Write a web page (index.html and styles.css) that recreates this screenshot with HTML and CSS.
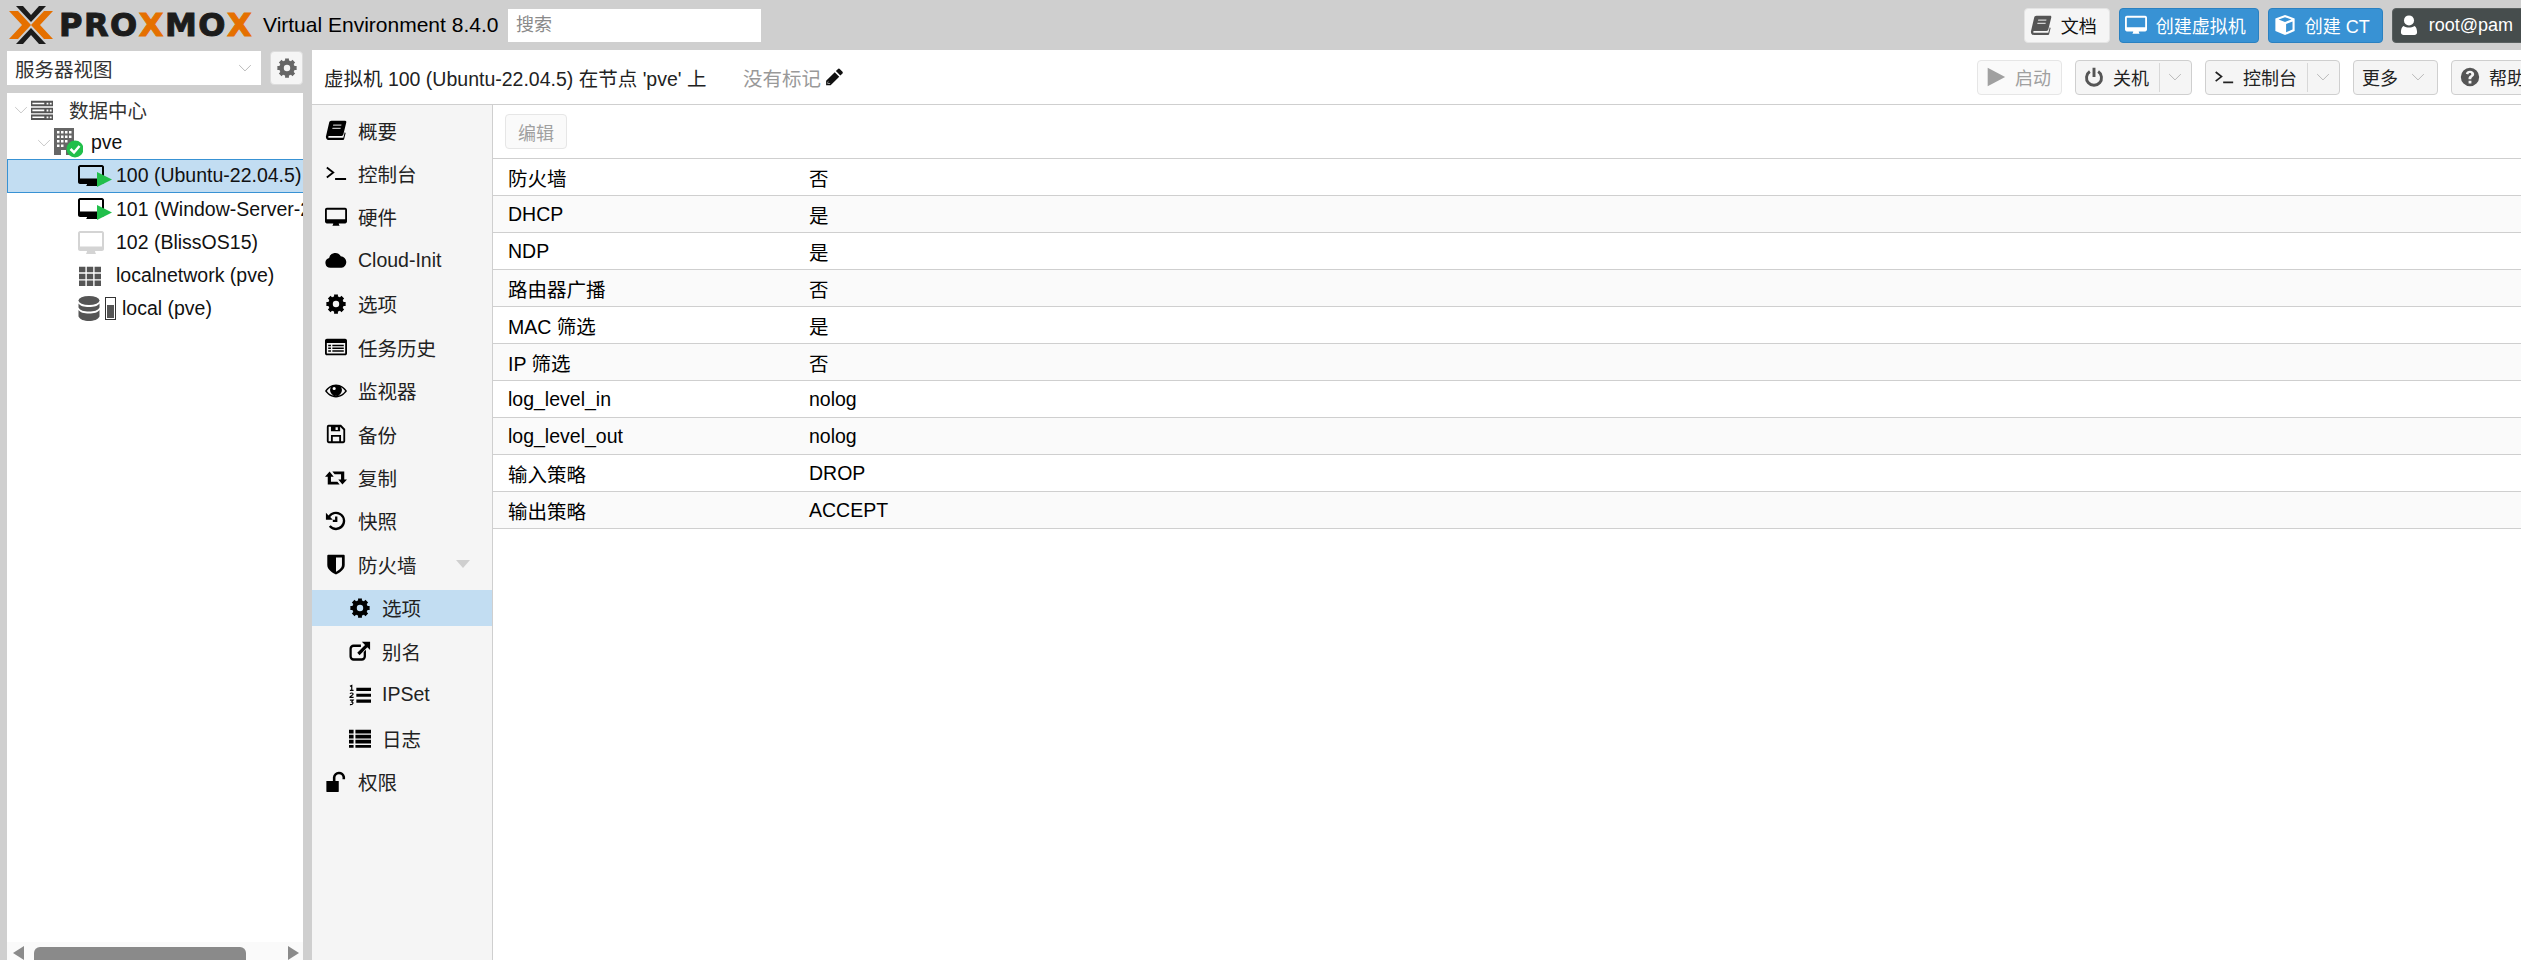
FILE: index.html
```html
<!DOCTYPE html>
<html lang="zh-CN">
<head>
  <meta charset="UTF-8">
  <title>pve - Proxmox Virtual Environment</title>
  <link rel="stylesheet" href="styles.css">
</head>
<body>
  <svg class="defs" xmlns="http://www.w3.org/2000/svg">
    <symbol id="i-book" viewBox="0 0 24 24"><path d="M7 2h15c1 0 1.400.8 1.200 1.700L20 17c-.3 1-.8 1.500-2 1.500H5c-1 0-1.500.5-1.500 1s.5 1 1.500 1h15l1.500-6 1 .8-1.700 6.800c-.1.500-.6.900-1.100.9H4.500C2.500 23 1 21.500 1 19.500c0-.4 0-.8.200-1.200L4.500 4C4.800 2.800 5.800 2 7 2z"/><path fill="#fff" fill-opacity=".75" d="M9 6h9l-.3 1.300h-9zM8.200 9.500h9l-.3 1.300h-9z"/></symbol>
    <symbol id="i-term" viewBox="0 0 24 24"><path fill="none" stroke="currentColor" stroke-width="2" d="M2 6l7 5.500L2 17M11 18.500h12"/></symbol>
    <symbol id="i-desk" viewBox="0 0 24 24"><path fill-rule="evenodd" d="M2 2h20c1 0 2 1 2 2v13c0 1-1 2-2 2h-7c0 1 .5 1.500 1 2.500H8c.5-1 1-1.500 1-2.500H2c-1 0-2-1-2-2V4c0-1 1-2 2-2zm0 2v10.500h20V4z"/></symbol>
    <symbol id="i-cloud" viewBox="0 0 24 24"><path d="M6 20.500a5.500 5.500 0 0 1-1.500-10.800A6.800 6.800 0 0 1 17.200 8a6.300 6.300 0 0 1 .8 12.500z"/></symbol>
    <symbol id="i-gear" viewBox="0 0 24 24"><circle cx="12" cy="12" r="6" fill="none" stroke="currentColor" stroke-width="5"/><path fill="none" stroke="currentColor" stroke-width="4.200" d="M12 1.500v4M12 18.500v4M1.500 12h4M18.500 12h4M4.600 4.600l2.800 2.800M16.600 16.600l2.800 2.800M4.600 19.400l2.800-2.800M16.600 7.400l2.800-2.800"/></symbol>
    <symbol id="i-list" viewBox="0 0 24 24"><path fill-rule="evenodd" d="M2 3h20c1 0 2 1 2 2v14c0 1-1 2-2 2H2c-1 0-2-1-2-2V5c0-1 1-2 2-2zm0 4.500V19h20V7.500zM3.500 9.500h3v1.800h-3zM8 9.500h12.500v1.800H8zM3.500 12.500h3v1.800h-3zM8 12.500h12.500v1.800H8zM3.500 15.500h3v1.800h-3zM8 15.500h12.500v1.800H8z"/></symbol>
    <symbol id="i-eye" viewBox="0 0 24 24"><path fill-rule="evenodd" d="M12 5c5.500 0 9.500 3.500 12 7-2.500 3.500-6.500 7-12 7S2.500 15.500 0 12c2.500-3.500 6.500-7 12-7zM6.500 7.800C4.600 8.800 3.100 10.300 2 12c2.200 3 5.500 5.200 10 5.200S19.800 15 22 12c-1.100-1.700-2.600-3.200-4.500-4.200.7 1 1 2 1 3.200a6.500 6.500 0 0 1-13 0c0-1.200.3-2.200 1-3.200z"/><path fill="#fff" d="M10 7.500a1 1 0 0 1 0 3.500 1 1 0 0 1 0-3.500z"/></symbol>
    <symbol id="i-save" viewBox="0 0 24 24"><path fill-rule="evenodd" d="M4 2h13.500L22 6.500V20a2 2 0 0 1-2 2H4a2 2 0 0 1-2-2V4a2 2 0 0 1 2-2zm0 2v16h2.500v-7h11v7H20V7.500L16.500 4v5h-10V4zm4.500 11v5h7v-5zM11.500 4.500v3H14v-3z"/></symbol>
    <symbol id="i-retweet" viewBox="0 0 24 24"><path d="M5 5L0 10.500h3V19h13l-2.500-3H6.500v-5.500h3zM19 19l5-5.500h-3V5H8l2.500 3h7v5.500h-3z"/></symbol>
    <symbol id="i-history" viewBox="0 0 24 24"><path d="M12 2a10 10 0 1 1-7.800 16.200l2-1.700A7.500 7.500 0 1 0 5.700 7.700L8.500 10.500H1V3l2.900 2.900A10 10 0 0 1 12 2z"/><path d="M11 7h2.500v6H8.500v-2.300H11z"/></symbol>
    <symbol id="i-shield" viewBox="0 0 24 24"><path fill-rule="evenodd" d="M3.500 2h17c.6 0 1 .4 1 1v10c0 5-5.500 8.500-9.500 10.500C8 21.500 2.500 18 2.500 13V3c0-.6.4-1 1-1zm8.500 3v15.500c3-1.700 6.500-4.200 6.500-7.500V5z"/></symbol>
    <symbol id="i-link" viewBox="0 0 24 24"><path d="M14 2h9v9l-3-3-8.500 8.500-2.500-2.500L17.500 5.500z"/><path d="M5 5h8v2.500H5A2 2 0 0 0 3 9.500V18a2 2 0 0 0 2 2h9a2 2 0 0 0 2-2v-5l2.500-2.500V18a4.500 4.500 0 0 1-4.500 4.500H5A4.500 4.500 0 0 1 .5 18V9.500A4.500 4.500 0 0 1 5 5z"/></symbol>
    <symbol id="i-listol" viewBox="0 0 24 24"><path d="M8 4h16v3.500H8zM8 10.500h16V14H8zM8 17h16v3.500H8z"/><path fill="none" stroke="currentColor" stroke-width="1.300" d="M1 2.500l2-1V7M1 7h4M1 10.500c1-1 3.500-1 3.500.5S1 13 1 14.500h4M1 17.500h3.500L3 19.500c2 0 2 3.500-2 3"/></symbol>
    <symbol id="i-thlist" viewBox="0 0 24 24"><path d="M0 3h5v4H0zM7 3h17v4H7zM0 8.500h5v4H0zM7 8.500h17v4H7zM0 14h5v4H0zM7 14h17v4H7zM0 19.500h5v3H0zM7 19.500h17v3H7z"/></symbol>
    <symbol id="i-unlock" viewBox="0 0 24 24"><path d="M1.500 11H15v11c0 .6-.4 1-1 1H2.500c-.6 0-1-.4-1-1z"/><path fill="none" stroke="currentColor" stroke-width="2.800" d="M10 11V7a5.300 5.300 0 0 1 10.500-.5V9"/></symbol>
    <symbol id="i-power" viewBox="0 0 24 24"><path fill="none" stroke="currentColor" stroke-width="3.500" d="M7 5.500a9 9 0 1 0 10 0M12 1v11"/></symbol>
    <symbol id="i-play" viewBox="0 0 24 24"><path d="M2 1l21 11L2 23z"/></symbol>
    <symbol id="i-help" viewBox="0 0 24 24"><path fill-rule="evenodd" d="M12 1a11 11 0 1 1 0 22 11 11 0 0 1 0-22zm-1.700 15.500v3.300h3.400v-3.300zM12 4.500c-2.700 0-4.500 1.300-5 3.700l3 .8c.3-1.200 1-1.700 1.900-1.700s1.700.5 1.700 1.300c0 1.400-3.400 2-3.400 5.200v1h3.400v-.7c0-1.800 3.400-2.300 3.400-5.600 0-2.400-2.300-4-5-4z"/></symbol>
    <symbol id="i-user" viewBox="0 0 24 24"><circle cx="12" cy="7" r="5.500"/><path d="M6 13c2 1.200 4 1.700 6 1.700s4-.5 6-1.700c2 1 2.800 4 2.800 7 0 2-1.300 3-2.800 3H6c-1.500 0-2.800-1-2.800-3 0-3 .8-6 2.800-7z"/></symbol>
    <symbol id="i-cube" viewBox="0 0 24 24"><path fill-rule="evenodd" d="M12 1l10.500 4v13.500L12 23 1.500 18.500V5zM12 3.500L5 6l7 2.700L19 6zM13.200 11v9l7-3V8.300z"/></symbol>
    <symbol id="i-pencil" viewBox="0 0 24 24"><path d="M17 1.500c1-1 2-1 3 0l3 3c1 1 1 2 0 3l-2.500 2.500-6-6zM13 5.500l6 6L7.500 23H1.500v-6z"/><path fill="#fff" d="M4 17.500l-.8 2.800 1 1 2.800-.8-.5-.5-2 .5-.5-.5.5-2z"/></symbol>
    <symbol id="i-down" viewBox="0 0 24 24"><path fill="none" stroke="currentColor" stroke-width="1.600" d="M2 7l10 10L22 7"/></symbol>
    <symbol id="i-server" viewBox="0 0 24 24"><path fill-rule="evenodd" d="M0 2h24v6H0zm17 2v2h2V4zm3.500 0v2h2V4zM0 9.500h24v6H0zm17 2v2h2v-2zm3.500 0v2h2v-2zM0 17h24v6H0zm17 2v2h2v-2zm3.500 0v2h2v-2z"/><path fill="#fff" d="M1.500 4h13v1.800h-13zM1.500 11.500h13v1.800h-13zM1.500 19h13v1.800h-13z"/></symbol>
    <symbol id="i-node" viewBox="0 0 30 30"><path fill="#666" fill-rule="evenodd" d="M1 0h20v27H1zm3 3v2.500h2.500V3zm4 0v2.500h2.500V3zm4 0v2.500h2.500V3zm4 0v2.500h2.500V3zM4 7.500V10h2.500V7.500zm4 0V10h2.500V7.500zm4 0V10h2.500V7.500zm4 0V10h2.500V7.500zM4 12v2.500h2.500V12zm4 0v2.500h2.500V12zm4 0v2.500h2.500V12zM4 16.500V19h2.500v-2.500zm4 0V19h2.500v-2.500zM8 22v5h5v-5z"/><circle cx="22" cy="21" r="8.500" fill="#21bf4b"/><path fill="none" stroke="#fff" stroke-width="2.500" d="M17.500 21l3.500 3.500 5.500-6.500"/></symbol>
    <symbol id="i-vm" viewBox="0 0 34 22"><path fill="#000" fill-rule="evenodd" d="M2 0h22c1 0 2 1 2 2v15c0 1-1 2-2 2h-5c0 1 .5 1.500 1 2H8c.5-.5 1-1 1-2H2c-1 0-2-1-2-2V2c0-1 1-2 2-2zm0 2v11.500h22V2z"/><path fill="#21bf4b" d="M19 7l15 7.500L19 22z"/></symbol>
    <symbol id="i-vmoff" viewBox="0 0 26 23"><path fill="#d4d4d4" fill-rule="evenodd" d="M2 0h22c1 0 2 1 2 2v16c0 1-1 2-2 2h-7c0 1 .5 2 1 3H8c.5-1 1-2 1-3H2c-1 0-2-1-2-2V2c0-1 1-2 2-2zm0 2v13.500h22V2z"/></symbol>
    <symbol id="i-th" viewBox="0 0 24 24"><path d="M0 2h7v6H0zM8.500 2h7v6h-7zM17 2h7v6h-7zM0 9.500h7v6H0zM8.500 9.500h7v6h-7zM17 9.500h7v6h-7zM0 17h7v6H0zM8.500 17h7v6h-7zM17 17h7v6h-7z"/></symbol>
    <symbol id="i-store" viewBox="0 0 22 25"><ellipse cx="11" cy="4.500" rx="10.500" ry="4.500"/><path d="M.5 7.500C2 10 6 11 11 11s9-1 10.500-3.500v4C20 14.500 16 15.500 11 15.500S2 14.500.5 11.500zM.5 14C2 16.500 6 17.500 11 17.500s9-1 10.500-3.500v6.500c-1.500 3-5.500 4.500-10.500 4.500S2 23.500.5 20.500z"/></symbol>
  </svg>

  <header class="top">
    <div class="logo">
      <svg class="logo-mark" viewBox="0 0 44 38">
        <path fill="#e57000" d="M0 5h9l13 14L9 33H0l13-14zM44 5h-9L22 19l13 14h9L31 19z"/>
        <path fill="#1c1c1c" d="M7 0h7l8 9 8-9h7L22 16zM7 38h7l8-9 8 9h7L22 22z"/>
      </svg>
      <span class="logo-name">PRO<b>X</b>MO<b>X</b></span>
    </div>
    <div class="version">Virtual Environment 8.4.0</div>
    <div class="search">搜索</div>
    <div class="top-btns">
      <a class="btn top-btn"><svg class="ico ico-grey"><use href="#i-book"/></svg>文档</a>
      <a class="btn top-btn blue"><svg class="ico"><use href="#i-desk"/></svg>创建虚拟机</a>
      <a class="btn top-btn blue"><svg class="ico"><use href="#i-cube"/></svg>创建 CT</a>
      <a class="btn top-btn dark"><svg class="ico"><use href="#i-user"/></svg>root@pam</a>
    </div>
  </header>

  <div class="main">
    <aside class="side">
      <div class="view">
        <div class="view-select">服务器视图<svg class="chev"><use href="#i-down"/></svg></div>
        <a class="btn view-gear"><svg class="ico ico-grey"><use href="#i-gear"/></svg></a>
      </div>
      <div class="tree">
        <div class="tree-body">
          <div class="node lv0"><svg class="twist"><use href="#i-down"/></svg><svg class="ni ni-server"><use href="#i-server"/></svg>数据中心</div>
          <div class="node lv1"><svg class="twist"><use href="#i-down"/></svg><svg class="ni ni-node"><use href="#i-node"/></svg>pve</div>
          <div class="node lv2 selected"><svg class="ni ni-vm"><use href="#i-vm"/></svg>100 (Ubuntu-22.04.5)</div>
          <div class="node lv2"><svg class="ni ni-vm"><use href="#i-vm"/></svg>101 (Window-Server-2022)</div>
          <div class="node lv2"><svg class="ni ni-vm ni-off"><use href="#i-vmoff"/></svg>102 (BlissOS15)</div>
          <div class="node lv2"><svg class="ni ni-th"><use href="#i-th"/></svg>localnetwork (pve)</div>
          <div class="node lv2"><svg class="ni ni-store"><use href="#i-store"/></svg><span class="usage"><i></i></span>local (pve)</div>
        </div>
        <div class="hscroll">
          <span class="arrow left"></span>
          <span class="thumb"></span>
          <span class="arrow right"></span>
        </div>
      </div>
    </aside>

    <section class="panel">
      <div class="phead">
        <div class="ptitle">虚拟机 100 (Ubuntu-22.04.5) 在节点 'pve' 上</div>
        <div class="tags">没有标记<svg class="ico"><use href="#i-pencil"/></svg></div>
        <div class="pactions">
          <a class="btn tool off"><svg class="ico"><use href="#i-play"/></svg>启动</a>
          <a class="btn tool"><svg class="ico ico-grey"><use href="#i-power"/></svg>关机<span class="split"></span><svg class="chev"><use href="#i-down"/></svg></a>
          <a class="btn tool"><svg class="ico"><use href="#i-term"/></svg>控制台<span class="split"></span><svg class="chev"><use href="#i-down"/></svg></a>
          <a class="btn tool">更多<svg class="chev chev-more"><use href="#i-down"/></svg></a>
          <a class="btn tool"><svg class="ico ico-grey"><use href="#i-help"/></svg>帮助</a>
        </div>
      </div>

      <div class="pbody">
        <nav class="nav">
          <a class="item"><svg class="ico"><use href="#i-book"/></svg>概要</a>
          <a class="item"><svg class="ico"><use href="#i-term"/></svg>控制台</a>
          <a class="item"><svg class="ico"><use href="#i-desk"/></svg>硬件</a>
          <a class="item"><svg class="ico"><use href="#i-cloud"/></svg>Cloud-Init</a>
          <a class="item"><svg class="ico"><use href="#i-gear"/></svg>选项</a>
          <a class="item"><svg class="ico"><use href="#i-list"/></svg>任务历史</a>
          <a class="item"><svg class="ico"><use href="#i-eye"/></svg>监视器</a>
          <a class="item"><svg class="ico"><use href="#i-save"/></svg>备份</a>
          <a class="item"><svg class="ico"><use href="#i-retweet"/></svg>复制</a>
          <a class="item"><svg class="ico"><use href="#i-history"/></svg>快照</a>
          <a class="item"><svg class="ico"><use href="#i-shield"/></svg>防火墙<span class="caret"></span></a>
          <a class="item sub active"><svg class="ico"><use href="#i-gear"/></svg>选项</a>
          <a class="item sub"><svg class="ico"><use href="#i-link"/></svg>别名</a>
          <a class="item sub"><svg class="ico"><use href="#i-listol"/></svg>IPSet</a>
          <a class="item sub"><svg class="ico"><use href="#i-thlist"/></svg>日志</a>
          <a class="item"><svg class="ico"><use href="#i-unlock"/></svg>权限</a>
        </nav>

        <div class="content">
          <div class="ctools"><a class="btn edit">编辑</a></div>
          <div class="row"><span class="key">防火墙</span><span>否</span></div>
          <div class="row"><span class="key">DHCP</span><span>是</span></div>
          <div class="row"><span class="key">NDP</span><span>是</span></div>
          <div class="row"><span class="key">路由器广播</span><span>否</span></div>
          <div class="row"><span class="key">MAC 筛选</span><span>是</span></div>
          <div class="row"><span class="key">IP 筛选</span><span>否</span></div>
          <div class="row"><span class="key">log_level_in</span><span>nolog</span></div>
          <div class="row"><span class="key">log_level_out</span><span>nolog</span></div>
          <div class="row"><span class="key">输入策略</span><span>DROP</span></div>
          <div class="row"><span class="key">输出策略</span><span>ACCEPT</span></div>
        </div>
      </div>
    </section>
  </div>
</body>
</html>
```

FILE: styles.css
```css
* {
  box-sizing: border-box;
}
body {
  margin: 0;
  width: 100vw;
  height: 100vh;
  overflow: hidden;
  display: flex;
  flex-direction: column;
  background: #cfcfcf;
  color: #000;
  font-family: "Liberation Sans", "Noto Sans CJK SC", sans-serif;
  font-size: 19.5px;
}
.defs {
  display: none;
}
.ico {
  width: 20px;
  height: 20px;
  flex: none;
  fill: currentColor;
}
.ico-grey {
  color: #555;
}

/* top bar */
.top {
  flex: none;
  height: 50px;
  display: flex;
  align-items: center;
  padding-left: 9px;
}
.logo {
  display: flex;
  align-items: center;
  width: 254px;
}
.logo-mark {
  width: 44px;
  height: 38px;
  flex: none;
}
.logo-name {
  margin-left: 6px;
  font-family: "DejaVu Sans", sans-serif;
  font-weight: 700;
  font-size: 32px;
  letter-spacing: 1.5px;
  color: #1c1c1c;
  -webkit-text-stroke: 1px currentColor;
}
.logo-name b {
  color: #e57000;
}
.version {
  width: 245px;
  font-size: 21px;
  white-space: nowrap;
}
.search {
  width: 253px;
  height: 33px;
  margin-top: 1px;
  padding: 0 8px;
  line-height: 33px;
  background: #fff;
  color: #8a8a8a;
  font-size: 18px;
}
.top-btns {
  margin-left: auto;
  margin-right: -5px;
  display: flex;
  gap: 9px;
}

/* buttons */
.btn {
  display: flex;
  align-items: center;
  border: 1px solid #dcdcdc;
  border-radius: 4px;
  background: #f5f5f5;
  color: #111;
  font-size: 18px;
  white-space: nowrap;
}
.top-btn {
  height: 35px;
  gap: 9px;
  padding: 0 12px 0 5px;
  border-color: #e4e4e4;
}
.top-btn .ico {
  width: 22px;
  height: 22px;
}
.top-btn.blue {
  background: #3892d4;
  border-color: #2a81c1;
  color: #fff;
}
.top-btn.dark {
  background: #464d4d;
  border-color: #5a6060;
  color: #fff;
}
.chev {
  width: 14px;
  height: 14px;
  flex: none;
  color: #b5b5b5;
}

/* left side */
.main {
  flex: 1;
  display: flex;
  min-height: 0;
}
.side {
  flex: none;
  width: 296px;
  margin: 0 9px 0 7px;
  display: flex;
  flex-direction: column;
}
.view {
  display: flex;
  gap: 9px;
  height: 34px;
  margin: 1px 0 8px;
}
.view-select {
  flex: 1;
  display: flex;
  align-items: center;
  justify-content: space-between;
  padding: 0 9px 0 8px;
  background: #fff;
  color: #333;
  font-size: 19.5px;
}
.view-gear {
  width: 33px;
  justify-content: center;
}
.view-gear .ico {
  width: 22px;
  height: 22px;
  color: #666;
}
.tree {
  flex: 1;
  display: flex;
  flex-direction: column;
  min-height: 0;
  background: #fff;
}
.tree-body {
  flex: 1;
  overflow: hidden;
}
.node {
  height: 33.2px;
  display: flex;
  align-items: center;
  white-space: nowrap;
  color: #111;
}
.node.selected {
  background: #c2ddf2;
  border-top: 1px solid #3892d4;
  border-bottom: 1px solid #3892d4;
  border-left: 1px solid #3892d4;
}
.lv0 {
  padding-left: 7px;
  color: #333;
}
.lv1 {
  padding-left: 30px;
}
.lv2 {
  padding-left: 71px;
}
.node.selected.lv2 {
  padding-left: 70px;
}
.twist {
  width: 14px;
  height: 14px;
  flex: none;
  color: #c4c4c4;
  margin-right: 2px;
}
.ni {
  flex: none;
  fill: #555;
}
.ni-server {
  width: 24px;
  height: 22px;
  margin-right: 15px;
  fill: #555;
}
.ni-node {
  width: 30px;
  height: 30px;
  margin-right: 8px;
  margin-top: 1px;
}
.ni-vm {
  width: 34px;
  height: 22px;
  margin-right: 4px;
}
.ni-off {
  width: 26px;
  height: 23px;
  margin-right: 12px;
}
.ni-th {
  width: 24px;
  height: 22px;
  margin-right: 14px;
}
.ni-store {
  width: 22px;
  height: 25px;
  margin-right: 5px;
}
.usage {
  width: 11px;
  height: 23px;
  margin-right: 6px;
  border: 1px solid #333;
  display: flex;
  align-items: flex-end;
  padding: 1px;
}
.usage i {
  flex: 1;
  height: 72%;
  background: #555;
}
.hscroll {
  flex: none;
  height: 18px;
  display: flex;
  align-items: flex-end;
  padding: 0 4px 0 6px;
  background: #fafafa;
}
.thumb {
  width: 212px;
  height: 13px;
  margin: 0 42px 0 10px;
  border-radius: 6px 6px 0 0;
  background: #8a8a8a;
}
.arrow {
  width: 0;
  height: 0;
  border-top: 7px solid transparent;
  border-bottom: 7px solid transparent;
}
.arrow.left {
  border-right: 11px solid #8a8a8a;
}
.arrow.right {
  border-left: 11px solid #8a8a8a;
}

/* panel */
.panel {
  flex: 1;
  min-width: 0;
  display: flex;
  flex-direction: column;
  background: #fff;
}
.phead {
  flex: none;
  height: 55px;
  display: flex;
  align-items: center;
  padding-left: 12px;
  border-bottom: 1px solid #cfcfcf;
}
.ptitle {
  width: 419px;
  white-space: nowrap;
  color: #222;
  font-size: 19.5px;
}
.tags {
  display: flex;
  align-items: center;
  gap: 4px;
  color: #999;
}
.tags .ico {
  color: #111;
  width: 18px;
  height: 18px;
}
.pactions {
  margin-left: auto;
  margin-right: -15px;
  display: flex;
  gap: 13px;
}
.tool {
  height: 35px;
  padding: 0 10px 0 8px;
  gap: 9px;
  color: #222;
  border-color: #cfcfcf;
}
.tool.off {
  color: #a0a0a0;
  background: #fafafa;
  border-color: #e6e6e6;
}
.split {
  width: 1px;
  height: 29px;
  background: #d8d8d8;
  margin-left: 1px;
}
.tool .split + .chev {
  margin: 0 -1px 0 -1px;
}
.tool .chev-more {
  margin: 0 2px 0 4px;
}

/* nav */
.pbody {
  flex: 1;
  min-height: 0;
  display: flex;
}
.nav {
  flex: none;
  width: 181px;
  padding-top: 7px;
  background: #f5f5f5;
  border-right: 1px solid #cfcfcf;
}
.item {
  height: 36px;
  margin-bottom: 7.45px;
  display: flex;
  align-items: center;
  gap: 11px;
  padding-left: 13px;
  color: #222;
  white-space: nowrap;
}
.item .ico {
  width: 22px;
  height: 22px;
  color: #000;
}
.item.sub {
  padding-left: 37px;
}
.item.active {
  background: #c2ddf2;
}
.caret {
  margin-left: 28px;
  border-left: 7px solid transparent;
  border-right: 7px solid transparent;
  border-top: 8px solid #cfcfcf;
}

/* options grid */
.content {
  flex: 1;
  min-width: 0;
}
.ctools {
  height: 54px;
  padding: 9px 12px;
  border-bottom: 1px solid #cfcfcf;
}
.edit {
  width: 62px;
  height: 35px;
  justify-content: center;
  color: #a0a0a0;
  background: #fafafa;
  border-color: #e6e6e6;
}
.row {
  height: 37px;
  display: flex;
  align-items: center;
  padding-left: 15px;
  border-bottom: 1px solid #cfcfcf;
}
.row:nth-child(odd) {
  background: #fafafa;
}
.key {
  width: 301px;
}
```
